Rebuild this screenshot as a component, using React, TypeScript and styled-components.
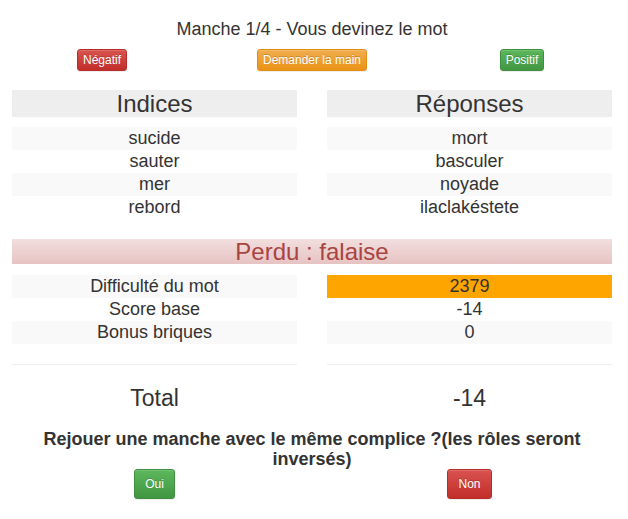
import React from "react";
import styled, { createGlobalStyle, css } from "styled-components";

const GlobalStyle = createGlobalStyle`
  html, body {
    margin: 0;
    padding: 0;
    background: #ffffff;
  }
  body {
    font-family: "Liberation Sans", Arial, Helvetica, sans-serif;
    color: #333333;
  }
`;

const Page = styled.div`
  width: 600px;
  margin-left: 12px;
  padding-bottom: 20px;
`;

const Title = styled.div`
  margin-top: 19px;
  font-size: 18px;
  line-height: 20px;
  text-align: center;
  color: #333;
`;

const ActionRow = styled.div`
  display: grid;
  grid-template-columns: repeat(3, 1fr);
  justify-items: center;
  margin: 10px -15px 0;
`;

type Variant = "danger" | "warning" | "success";

const variants: Record<Variant, ReturnType<typeof css>> = {
  danger: css`
    background-image: linear-gradient(to bottom, #d9534f 0%, #c12e2a 100%);
    border-color: #b92c28;
  `,
  warning: css`
    background-image: linear-gradient(to bottom, #f0ad4e 0%, #eb9316 100%);
    border-color: #e38d13;
  `,
  success: css`
    background-image: linear-gradient(to bottom, #5cb85c 0%, #419641 100%);
    border-color: #3e8f3e;
  `,
};

const Btn = styled.button<{ $variant: Variant; $size: "xs" | "sm" }>`
  display: inline-block;
  box-sizing: border-box;
  font-family: "Liberation Sans", Arial, sans-serif;
  font-size: 12px;
  line-height: 18px;
  color: #fff;
  border: 1px solid transparent;
  border-radius: 3px;
  text-shadow: 0 -1px 0 rgba(0, 0, 0, 0.2);
  box-shadow: inset 0 1px 0 rgba(255, 255, 255, 0.15), 0 1px 1px rgba(0, 0, 0, 0.075);
  cursor: pointer;
  white-space: nowrap;
  padding: ${(p) => (p.$size === "xs" ? "1px 5px" : "5px 10px")};
  ${(p) => variants[p.$variant]}
`;

const TwoCol = styled.div<{ $top?: number }>`
  display: grid;
  grid-template-columns: 285px 285px;
  column-gap: 30px;
  margin-top: ${(p) => p.$top ?? 0}px;
`;

const Column = styled.div`
  display: flex;
  flex-direction: column;
`;

const ColHeader = styled.div`
  background: #eeeeee;
  font-size: 24px;
  line-height: 27px;
  height: 27px;
  text-align: center;
  color: #333;
  margin-bottom: 10px;
`;

const Cell = styled.div<{ $striped?: boolean; $highlight?: boolean }>`
  height: 23px;
  line-height: 23px;
  font-size: 18px;
  text-align: center;
  color: #333;
  background: ${(p) => (p.$highlight ? "#ffa500" : p.$striped ? "#f9f9f9" : "transparent")};
`;

const ResultBand = styled.div`
  margin-top: 20px;
  height: 25px;
  line-height: 25px;
  font-size: 24px;
  text-align: center;
  color: #a94442;
  background-image: linear-gradient(to bottom, #f2dede 0%, #e7c3c3 100%);
`;

const Divider = styled.div`
  margin-top: 20px;
  height: 1px;
  background: #eeeeee;
`;

const TotalCell = styled.div`
  margin-top: 20px;
  font-size: 23px;
  line-height: 26px;
  text-align: center;
  color: #333;
`;

const Prompt = styled.h4`
  margin: 19px 0 0;
  font-size: 18px;
  font-weight: bold;
  line-height: 19.5px;
  text-align: center;
  color: #333;
`;

const ChoiceCell = styled.div`
  display: flex;
  justify-content: center;
`;

const clues = ["sucide", "sauter", "mer", "rebord"];
const answers = ["mort", "basculer", "noyade", "ilaclakéstete"];

const scores = [
  { label: "Difficulté du mot", value: "2379", highlight: true },
  { label: "Score base", value: "-14" },
  { label: "Bonus briques", value: "0" },
];

export default function App() {
  return (
    <>
      <GlobalStyle />
      <Page>
        <Title>Manche 1/4 - Vous devinez le mot</Title>
        <ActionRow>
          <Btn $variant="danger" $size="xs">Négatif</Btn>
          <Btn $variant="warning" $size="xs">Demander la main</Btn>
          <Btn $variant="success" $size="xs">Positif</Btn>
        </ActionRow>

        <TwoCol $top={19}>
          <Column>
            <ColHeader>Indices</ColHeader>
            {clues.map((c, i) => (
              <Cell key={c} $striped={i % 2 === 0}>{c}</Cell>
            ))}
          </Column>
          <Column>
            <ColHeader>Réponses</ColHeader>
            {answers.map((a, i) => (
              <Cell key={a} $striped={i % 2 === 0}>{a}</Cell>
            ))}
          </Column>
        </TwoCol>

        <ResultBand>Perdu : falaise</ResultBand>

        <TwoCol $top={11}>
          <Column>
            {scores.map((s, i) => (
              <Cell key={s.label} $striped={i % 2 === 0}>{s.label}</Cell>
            ))}
            <Divider />
            <TotalCell>Total</TotalCell>
          </Column>
          <Column>
            {scores.map((s, i) => (
              <Cell key={s.label} $striped={i % 2 === 0} $highlight={s.highlight}>
                {s.value}
              </Cell>
            ))}
            <Divider />
            <TotalCell>-14</TotalCell>
          </Column>
        </TwoCol>

        <Prompt>Rejouer une manche avec le même complice ?(les rôles seront inversés)</Prompt>

        <TwoCol>
          <ChoiceCell>
            <Btn $variant="success" $size="sm">Oui</Btn>
          </ChoiceCell>
          <ChoiceCell>
            <Btn $variant="danger" $size="sm">Non</Btn>
          </ChoiceCell>
        </TwoCol>
      </Page>
    </>
  );
}
